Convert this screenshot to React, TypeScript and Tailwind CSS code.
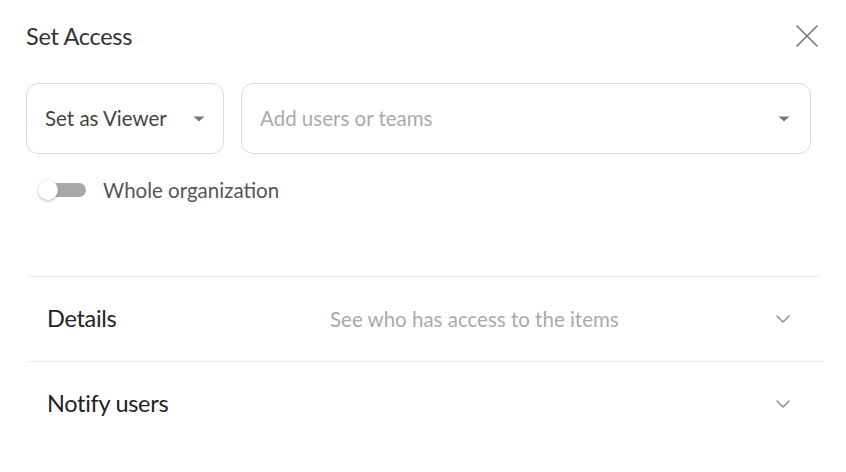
import React, { useState } from 'react';

function Caret() {
    return (
        <svg width="12" height="6" viewBox="0 0 12 6" className="shrink-0">
            <path d="M0.5 0.5 L11.5 0.5 L6 5.5 Z" fill="#777" />
        </svg>
    );
}

function Chevron() {
    return (
        <svg width="14" height="8" viewBox="0 0 14 8" fill="none" className="shrink-0">
            <path d="M1 1 L7 7 L13 1" stroke="#888" strokeWidth="1.4" strokeLinecap="round" strokeLinejoin="round" />
        </svg>
    );
}

function Row({ title, hint }: { title: string; hint?: string }) {
    return (
        <div className="flex items-center h-[84px] pl-[19px] pr-[30px]">
            <div className="w-[283px] text-[23.5px] text-[#222] tracking-[-0.3px]">{title}</div>
            <div className="flex-1 text-[20.5px] text-[#aaa]">{hint}</div>
            <Chevron />
        </div>
    );
}

export default function App() {
    const [whole, setWhole] = useState(false);

    return (
        <div className="w-[846px] h-[472px] bg-white font-['Lato','Noto_Sans',sans-serif] overflow-hidden">
            <div className="flex items-center justify-between pl-[26px] pr-[27px] pt-[22px] h-[50px]">
                <h1 className="text-[23.5px] leading-[28px] text-[#333] tracking-[-0.3px]">Set Access</h1>
                <button className="text-[#777]">
                    <svg width="24" height="24" viewBox="0 0 24 24" fill="none">
                        <path d="M2 2 L22 22 M22 2 L2 22" stroke="#777" strokeWidth="1.6" strokeLinecap="round" />
                    </svg>
                </button>
            </div>

            <div className="flex gap-[17px] pl-[26px] pr-[35px] mt-[33px]">
                <div className="w-[198px] h-[71px] shrink-0 flex items-center justify-between pl-[18px] pr-[18px] border border-[#dcdcdc] rounded-[12px]">
                    <span className="text-[20.5px] text-[#444]">Set as Viewer</span>
                    <Caret />
                </div>
                <div className="flex-1 h-[71px] flex items-center justify-between pl-[18px] pr-[20px] border border-[#dcdcdc] rounded-[12px]">
                    <span className="text-[20.5px] text-[#aaa]">Add users or teams</span>
                    <Caret />
                </div>
            </div>

            <div className="flex items-center gap-[17px] pl-[38px] mt-[26px] h-[20px]">
                <button onClick={() => setWhole(!whole)} className="relative w-[48px] h-[20px] shrink-0">
                    <span className="absolute left-[6px] right-0 top-[3px] h-[14px] rounded-full bg-[#a8a8a8]" />
                    <span className="absolute left-0 top-0 w-[20px] h-[20px] rounded-full bg-white shadow-[0_1px_3px_rgba(0,0,0,0.3)]" />
                </button>
                <span className="text-[20.5px] text-[#555]">Whole organization</span>
            </div>

            <div className="mt-[76px] ml-[28px] mr-[26px] border-t border-[#eaeaea]">
                <Row title="Details" hint="See who has access to the items" />
                <div className="border-t border-[#eaeaea] -mr-[4px]">
                    <div className="mr-[4px]">
                        <Row title="Notify users" />
                    </div>
                </div>
            </div>
        </div>
    );
}
